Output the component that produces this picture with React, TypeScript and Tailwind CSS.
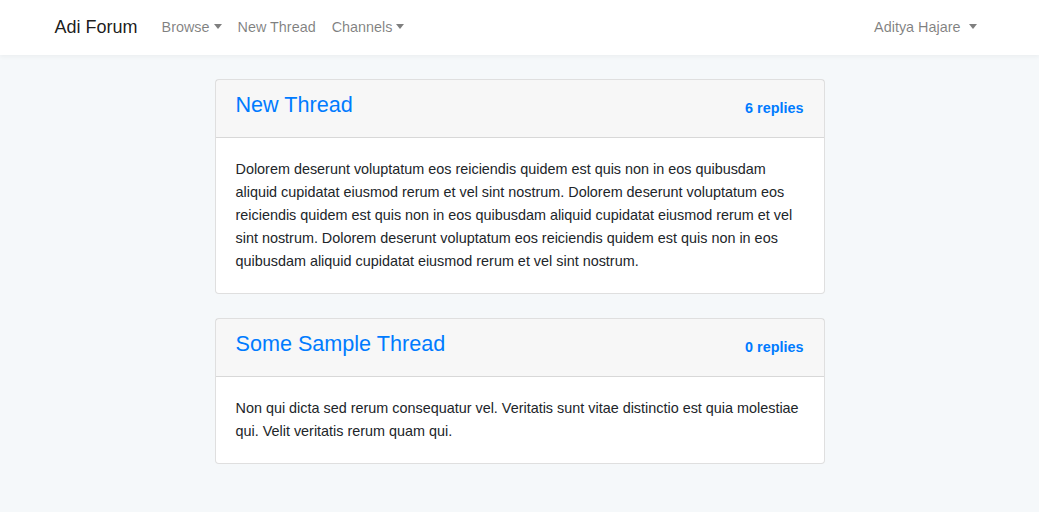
const threads = [
  {
    title: "New Thread",
    replies: 6,
    body: "Dolorem deserunt voluptatum eos reiciendis quidem est quis non in eos quibusdam aliquid cupidatat eiusmod rerum et vel sint nostrum. Dolorem deserunt voluptatum eos reiciendis quidem est quis non in eos quibusdam aliquid cupidatat eiusmod rerum et vel sint nostrum. Dolorem deserunt voluptatum eos reiciendis quidem est quis non in eos quibusdam aliquid cupidatat eiusmod rerum et vel sint nostrum.",
  },
  {
    title: "Some Sample Thread",
    replies: 0,
    body: "Non qui dicta sed rerum consequatur vel. Veritatis sunt vitae distinctio est quia molestiae qui. Velit veritatis rerum quam qui.",
  },
];

function Caret() {
  return (
    <span className="ml-[4px] inline-block h-0 w-0 border-x-[4px] border-t-[5px] border-x-transparent border-t-current align-[3px]" />
  );
}

export default function App() {
  return (
    <div className="min-h-[512px] bg-[#f5f8fa] font-['Liberation_Sans',Arial,sans-serif] text-[14.4px] leading-[1.6] text-[#212529]">
      <nav className="bg-white py-2 shadow-[0_2px_4px_rgba(0,0,0,0.04)]">
        <div className="mx-auto flex w-[960px] items-center px-[15px]">
          <a className="mr-4 py-[5px] text-[18px] leading-[1.6] text-black/90">
            Adi Forum
          </a>
          <ul className="flex">
            <li className="px-2 py-2 text-black/50">
              Browse
              <Caret />
            </li>
            <li className="px-2 py-2 text-black/50">New Thread</li>
            <li className="px-2 py-2 text-black/50">
              Channels
              <Caret />
            </li>
          </ul>
          <div className="ml-auto px-2 py-2 text-black/50">
            Aditya Hajare <Caret />
          </div>
        </div>
      </nav>

      <main className="py-6">
        <div className="mx-auto w-[610px]">
          {threads.map((t) => (
            <div
              key={t.title}
              className="mb-6 rounded-[4px] border border-black/[0.125] bg-white"
            >
              <div className="flex items-center border-b border-black/[0.125] bg-black/[0.03] px-5 py-3">
                <h4 className="mb-2 flex-1 text-[21.6px] leading-[25px] text-[#007bff]">
                  {t.title}
                </h4>
                <a className="font-bold text-[#007bff]">
                  {t.replies} replies
                </a>
              </div>
              <div className="p-5">{t.body}</div>
            </div>
          ))}
        </div>
      </main>
    </div>
  );
}
